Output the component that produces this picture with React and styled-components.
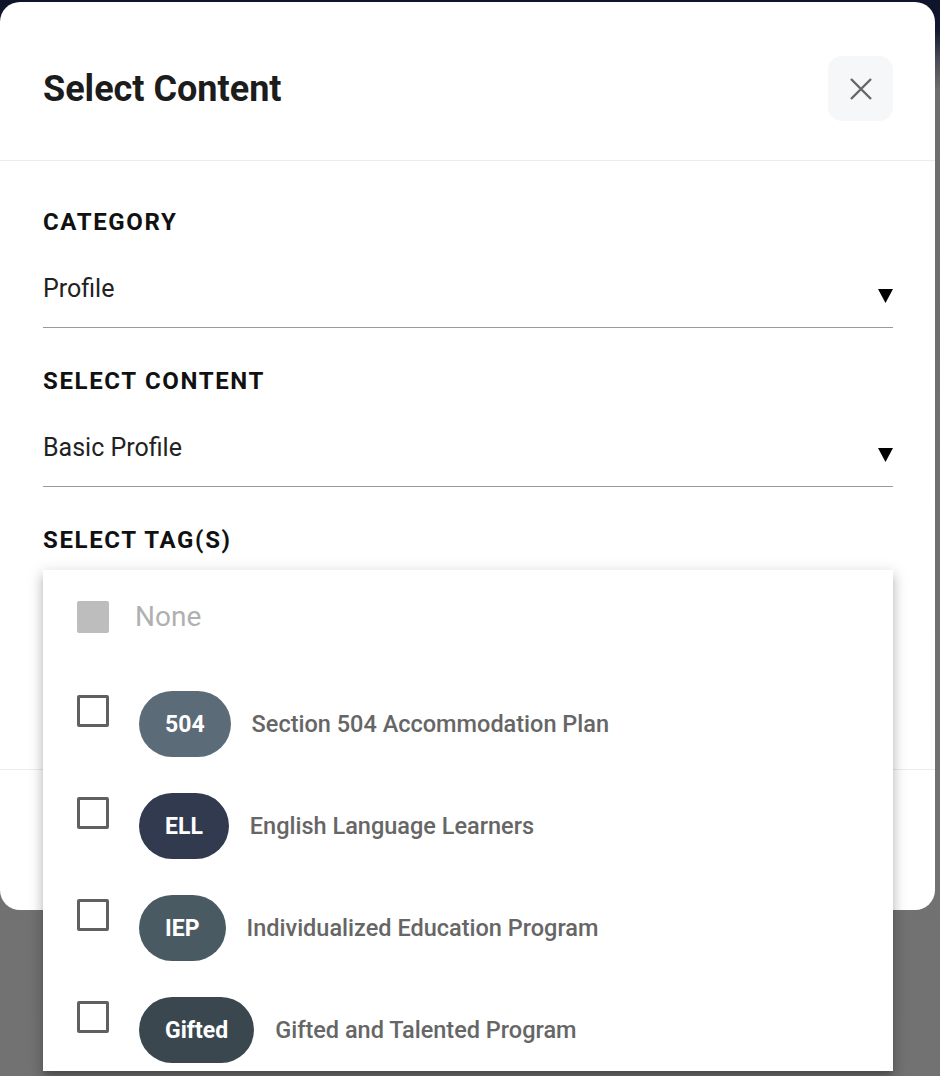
import styled, { createGlobalStyle } from "styled-components";

const GlobalStyle = createGlobalStyle`
  html, body {
    margin: 0;
    padding: 0;
    height: 100%;
  }
  body {
    font-family: Roboto, "Liberation Sans", sans-serif;
    background: linear-gradient(
      180deg,
      #0e1429 0px,
      #111830 30px,
      #4a4c55 60px,
      #6e6e6e 90px,
      #727272 100%
    );
    min-height: 1076px;
    overflow: hidden;
  }
  * {
    box-sizing: border-box;
  }
`;

const Page = styled.div`
  padding-top: 2px;
  height: 1076px;
`;

const Modal = styled.div`
  position: relative;
  width: 935px;
  background: #ffffff;
  border-radius: 20px;
`;

const Header = styled.div`
  display: flex;
  align-items: center;
  justify-content: space-between;
  padding: 54px 42px 39px 43px;
  border-bottom: 1px solid #ececec;
`;

const Title = styled.h2`
  margin: 0;
  font-size: 36px;
  line-height: 44px;
  font-weight: 700;
  color: #1c1c1c;
`;

const CloseButton = styled.button`
  width: 65px;
  height: 65px;
  border: none;
  border-radius: 14px;
  background: #f6f7f9;
  display: flex;
  align-items: center;
  justify-content: center;
  cursor: pointer;
  padding: 0;
`;

const Body = styled.div`
  padding: 47px 42px 123px 43px;
`;

const Field = styled.div`
  display: flex;
  flex-direction: column;
  margin-bottom: 39px;

  &:last-child {
    margin-bottom: 0;
  }
`;

const Label = styled.div`
  font-size: 24px;
  line-height: 28px;
  font-weight: 700;
  letter-spacing: 1.65px;
  color: #111111;
  text-transform: uppercase;
`;

const SelectRow = styled.div`
  display: flex;
  align-items: flex-end;
  justify-content: space-between;
  margin-top: 39px;
  padding-bottom: 24px;
  border-bottom: 1px solid #9a9a9a;
  min-height: 53px;
`;

const SelectValue = styled.div`
  font-size: 25px;
  line-height: 28px;
  color: #222222;
  align-self: flex-start;
`;

const Arrow = styled.svg`
  width: 15px;
  height: 14px;
  display: block;
`;

const Footer = styled.div`
  border-top: 1px solid #ececec;
  height: 141px;
  display: flex;
  align-items: center;
  justify-content: flex-end;
  gap: 16px;
  padding: 0 42px;
`;

const FooterButton = styled.button`
  height: 56px;
  padding: 0 28px;
  border-radius: 12px;
  border: none;
  font-family: inherit;
  font-size: 20px;
  font-weight: 500;
  background: ${(p) => (p.primary ? "#323a50" : "#f0f1f3")};
  color: ${(p) => (p.primary ? "#ffffff" : "#333333")};
`;

const Menu = styled.div`
  position: absolute;
  left: 43px;
  top: 568px;
  width: 850px;
  height: 501px;
  overflow: hidden;
  background: #ffffff;
  box-shadow: 0 5px 5px -3px rgba(0, 0, 0, 0.2),
    0 8px 10px 1px rgba(0, 0, 0, 0.14), 0 3px 14px 2px rgba(0, 0, 0, 0.12);
  padding: 31px 0 0 34px;
`;

const NoneRow = styled.div`
  display: flex;
  align-items: center;
  gap: 26px;
  margin-bottom: 58px;
`;

const NoneText = styled.span`
  font-size: 28px;
  line-height: 32px;
  color: #b0b0b0;
`;

const Box = styled.span`
  width: 32px;
  height: 32px;
  flex-shrink: 0;
  border-radius: 2px;
  display: block;
  background: ${(p) => (p.filled ? "#bdbdbd" : "transparent")};
  border: ${(p) => (p.filled ? "none" : "3px solid #606060")};
`;

const OptionRow = styled.div`
  display: flex;
  align-items: flex-start;
  height: 66px;
  margin-bottom: 36px;

  ${Box} {
    margin-top: 4px;
  }
`;

const Chip = styled.span`
  height: 66px;
  border-radius: 33px;
  padding: 0 26px;
  margin-left: 30px;
  display: flex;
  align-items: center;
  background: ${(p) => p.color};
  color: #ffffff;
  font-size: 23px;
  font-weight: 700;
`;

const OptionLabel = styled.span`
  align-self: center;
  margin-left: 21px;
  font-size: 23.5px;
  font-weight: 500;
  color: #666666;
`;

const tags = [
  { code: "504", name: "Section 504 Accommodation Plan", color: "#5b6b78" },
  { code: "ELL", name: "English Language Learners", color: "#323a50" },
  { code: "IEP", name: "Individualized Education Program", color: "#4a5a63" },
  { code: "Gifted", name: "Gifted and Talented Program", color: "#3a474f" },
];

function DropArrow() {
  return (
    <Arrow viewBox="0 0 15 14">
      <polygon points="0,0 15,0 7.5,14" fill="#000" />
    </Arrow>
  );
}

export default function App() {
  return (
    <Page>
      <GlobalStyle />
      <Modal>
        <Header>
          <Title>Select Content</Title>
          <CloseButton aria-label="close">
            <svg width="24" height="24" viewBox="0 0 24 24">
              <path
                d="M2 2 L22 22 M22 2 L2 22"
                stroke="#666"
                strokeWidth="2.4"
                fill="none"
              />
            </svg>
          </CloseButton>
        </Header>
        <Body>
          <Field>
            <Label>Category</Label>
            <SelectRow>
              <SelectValue>Profile</SelectValue>
              <DropArrow />
            </SelectRow>
          </Field>
          <Field>
            <Label>Select Content</Label>
            <SelectRow>
              <SelectValue>Basic Profile</SelectValue>
              <DropArrow />
            </SelectRow>
          </Field>
          <Field>
            <Label>Select Tag(s)</Label>
            <SelectRow>
              <SelectValue />
              <DropArrow />
            </SelectRow>
          </Field>
        </Body>
        <Footer>
          <FooterButton>Cancel</FooterButton>
          <FooterButton primary>Select</FooterButton>
        </Footer>
        <Menu>
          <NoneRow>
            <Box filled />
            <NoneText>None</NoneText>
          </NoneRow>
          {tags.map((t) => (
            <OptionRow key={t.code}>
              <Box />
              <Chip color={t.color}>{t.code}</Chip>
              <OptionLabel>{t.name}</OptionLabel>
            </OptionRow>
          ))}
        </Menu>
      </Modal>
    </Page>
  );
}
